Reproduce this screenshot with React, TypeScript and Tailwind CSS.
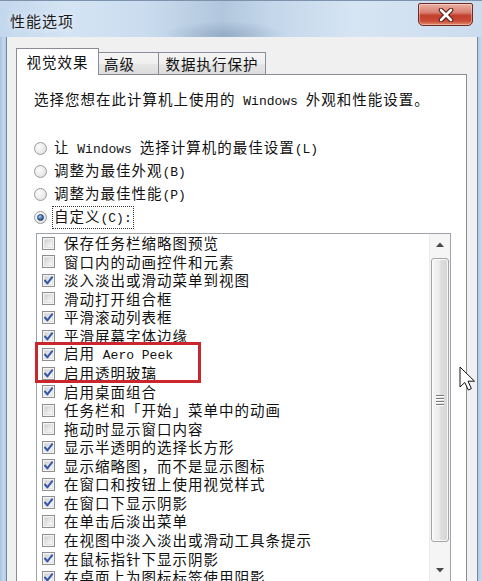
import React from "react";

type Item = { label: React.ReactNode; on: boolean };

function M({ children }: { children: React.ReactNode }) {
  return (
    <span className="font-['Liberation_Mono',monospace] text-[13px] tracking-normal">
      {children}
    </span>
  );
}

function Check({ on }: { on: boolean }) {
  return (
    <span className="relative flex h-[13px] w-[13px] shrink-0 items-center justify-center border border-[#8e8f8f] bg-[#f4f4f4]">
      <span className="absolute inset-[1px] border border-[#e2e2e2] bg-[linear-gradient(135deg,#cfcfcf_0%,#e6e6e6_50%,#fafafa_100%)]" />
      {on && (
        <svg className="relative" width="11" height="11" viewBox="0 0 11 11">
          <path d="M2 5.5 L4.4 8.4 L9.2 2.2" fill="none" stroke="#3556a8" strokeWidth="2" strokeLinecap="round" strokeLinejoin="round" />
        </svg>
      )}
    </span>
  );
}

function Radio({ on, children, focus }: { on?: boolean; children: React.ReactNode; focus?: boolean }) {
  return (
    <div className="flex h-[23px] items-center">
      <span className="relative flex h-[13px] w-[13px] shrink-0 items-center justify-center rounded-full border border-[#9a9b9b] bg-[radial-gradient(circle_at_35%_35%,#fbfbfb_0%,#ebebeb_55%,#d4d4d4_100%)]">
        {on && (
          <span className="h-[7px] w-[7px] rounded-full border border-[#1f3f6e] bg-[radial-gradient(circle_at_35%_30%,#b9d6f3_0%,#4b7fc0_45%,#163b72_100%)]" />
        )}
      </span>
      <span
        className={
          "ml-[6px] px-[1px] leading-[18px] " +
          (focus ? "outline outline-1 outline-dotted outline-[#333]" : "")
        }
      >
        {children}
      </span>
    </div>
  );
}

export default function App() {
  const items: Item[] = [
    { label: "保存任务栏缩略图预览", on: false },
    { label: "窗口内的动画控件和元素", on: false },
    { label: "淡入淡出或滑动菜单到视图", on: true },
    { label: "滑动打开组合框", on: false },
    { label: "平滑滚动列表框", on: true },
    { label: "平滑屏幕字体边缘", on: true },
    {
      label: (
        <>
          启用<M> Aero Peek</M>
        </>
      ),
      on: true,
    },
    { label: "启用透明玻璃", on: true },
    { label: "启用桌面组合", on: true },
    { label: "任务栏和「开始」菜单中的动画", on: false },
    { label: "拖动时显示窗口内容", on: false },
    { label: "显示半透明的选择长方形", on: true },
    { label: "显示缩略图，而不是显示图标", on: true },
    { label: "在窗口和按钮上使用视觉样式", on: true },
    { label: "在窗口下显示阴影", on: true },
    { label: "在单击后淡出菜单", on: false },
    { label: "在视图中淡入淡出或滑动工具条提示", on: false },
    { label: "在鼠标指针下显示阴影", on: true },
    { label: "在桌面上为图标标签使用阴影", on: true },
  ];

  return (
    <div className="relative flex h-[581px] w-[482px] flex-col overflow-hidden bg-[linear-gradient(180deg,#c8dbee_0%,#b9cfe7_100%)] font-['Noto_Sans_CJK_SC','Noto_Sans',sans-serif] text-[14.5px] tracking-[1px] text-[#111]">
      {/* Title bar */}
      <div className="relative h-[37px] shrink-0 border-t border-[#7d93ab] bg-[linear-gradient(90deg,#c3d7ed_0%,#d4e4f4_14%,#cadcef_30%,#b2c7dd_46%,#c3d6ea_56%,#d6e5f3_74%,#cbdcee_100%)]">
        <div className="absolute inset-0 bg-[radial-gradient(ellipse_60px_14px_at_225px_34px,rgba(110,140,170,0.45),rgba(110,140,170,0))]" />
        <div className="absolute left-[10px] top-[9px] text-[15px] leading-[22px] text-[#1a1a1a] [text-shadow:0_0_6px_rgba(255,255,255,0.9)]">
          性能选项
        </div>
        <div className="absolute left-[418px] top-[2px] flex h-[23px] w-[55px] items-center justify-center rounded-b-[5px] rounded-t-[2px] border border-[#6e2a22] bg-[linear-gradient(180deg,#eab0a2_0%,#d88071_40%,#c2402e_55%,#c94a36_80%,#e08c6c_100%)] shadow-[inset_0_0_0_1px_rgba(255,255,255,0.35)]">
          <svg width="18" height="14" viewBox="0 0 18 14">
            <path d="M4 2 L14 12 M14 2 L4 12" stroke="#5a1c14" strokeWidth="4.6" strokeLinecap="round" />
            <path d="M4 2 L14 12 M14 2 L4 12" stroke="#ffffff" strokeWidth="2.6" strokeLinecap="round" />
          </svg>
        </div>
      </div>

      {/* Body */}
      <div className="flex min-h-0 flex-1">
        <div className="w-[6px] shrink-0 bg-[linear-gradient(90deg,#a9c3df_0%,#c3d8ee_60%,#b3cbe4_100%)]" />
        <div className="w-px shrink-0 bg-[#6f86a0]" />
        <div className="flex min-w-0 flex-1 flex-col bg-[#f0f0f0] pl-[9px] pr-[10px] pt-[11px]">
          {/* Tabs */}
          <div className="relative z-10 flex h-[26px] shrink-0 items-end">
            <div className="-mb-px flex h-[27px] w-[83px] items-start justify-center border border-b-0 border-[#898c95] bg-white pt-[2px] leading-[22px]">
              视觉效果
            </div>
            <div className="flex h-[22px] w-[60px] items-center border border-b-0 border-l-0 border-[#898c95] bg-[linear-gradient(180deg,#f5f5f5_0%,#efefef_50%,#e6e6e6_51%,#dcdcdc_100%)] pl-[5px] pt-[1px] leading-[20px]">
              高级
            </div>
            <div className="flex h-[22px] w-[107px] items-center justify-center border border-b-0 border-l-0 border-[#898c95] bg-[linear-gradient(180deg,#f5f5f5_0%,#efefef_50%,#e6e6e6_51%,#dcdcdc_100%)] pt-[1px] leading-[20px]">
              数据执行保护
            </div>
          </div>

          {/* Tab page */}
          <div className="flex flex-1 flex-col border border-[#898c95] bg-white pl-[17px]">
            <div className="mt-[14px] h-[20px] leading-[20px]">
              选择您想在此计算机上使用的<M> Windows </M>外观和性能设置。
            </div>

            <div className="mt-[28px] flex flex-col">
              <Radio>
                让<M> Windows </M>选择计算机的最佳设置<M>(L)</M>
              </Radio>
              <Radio>
                调整为最佳外观<M>(B)</M>
              </Radio>
              <Radio>
                调整为最佳性能<M>(P)</M>
              </Radio>
              <Radio on focus>
                自定义<M>(C):</M>
              </Radio>
            </div>

            {/* List box */}
            <div className="ml-[2px] mt-[4px] flex h-[349px] w-[415px] shrink-0 border border-[#9ea3ab] bg-white">
              <div className="flex min-w-0 flex-1 flex-col">
                {items.map((it, i) => (
                  <div key={i} className="flex h-[18.55px] shrink-0 items-center pl-[5px]">
                    <Check on={it.on} />
                    <span className="ml-[9px] whitespace-nowrap leading-[18px]">{it.label}</span>
                  </div>
                ))}
              </div>
              {/* Scrollbar */}
              <div className="flex w-[21px] shrink-0 flex-col border-l border-[#ececec] bg-[#f5f5f5]">
                <div className="flex h-[21px] shrink-0 items-center justify-center">
                  <svg width="8" height="5" viewBox="0 0 8 5">
                    <path d="M0 5 L4 0.5 L8 5 Z" fill="#4a4a4a" />
                  </svg>
                </div>
                <div className="mx-[1px] mt-[3px] flex h-[284px] shrink-0 items-center justify-center rounded-[3px] border border-[#a2a6ab] bg-[linear-gradient(90deg,#f6f6f6_0%,#ececec_45%,#dedede_55%,#d6d6d6_100%)] shadow-[inset_0_0_0_1px_rgba(255,255,255,0.8)]">
                  <div className="flex flex-col gap-[2px]">
                    {[0, 1, 2, 3].map((k) => (
                      <span key={k} className="block h-px w-[8px] bg-[#7a7a7a] shadow-[0_1px_0_#ffffff]" />
                    ))}
                  </div>
                </div>
                <div className="flex-1" />
                <div className="flex h-[21px] shrink-0 items-center justify-center">
                  <svg width="8" height="5" viewBox="0 0 8 5">
                    <path d="M0 0 L4 4.5 L8 0 Z" fill="#4a4a4a" />
                  </svg>
                </div>
              </div>
            </div>
          </div>
        </div>
        <div className="w-px shrink-0 bg-[#6f86a0]" />
        <div className="w-[4px] shrink-0 bg-[linear-gradient(90deg,#b3cbe4_0%,#c6daee_100%)]" />
      </div>

      {/* Red annotation box */}
      <div className="pointer-events-none absolute left-[35px] top-[342px] h-[41px] w-[166px] border-[3px] border-[#c9262e]" />

      {/* Mouse cursor */}
      <svg className="absolute left-[459px] top-[366px]" width="18" height="26" viewBox="0 0 18 26">
        <path d="M1 1 L1 21 L5.8 16.5 L9.3 24 L12.4 22.6 L9 15.2 L15.5 15.2 Z" fill="#ffffff" stroke="#111111" strokeWidth="1" strokeLinejoin="round" />
      </svg>
    </div>
  );
}
